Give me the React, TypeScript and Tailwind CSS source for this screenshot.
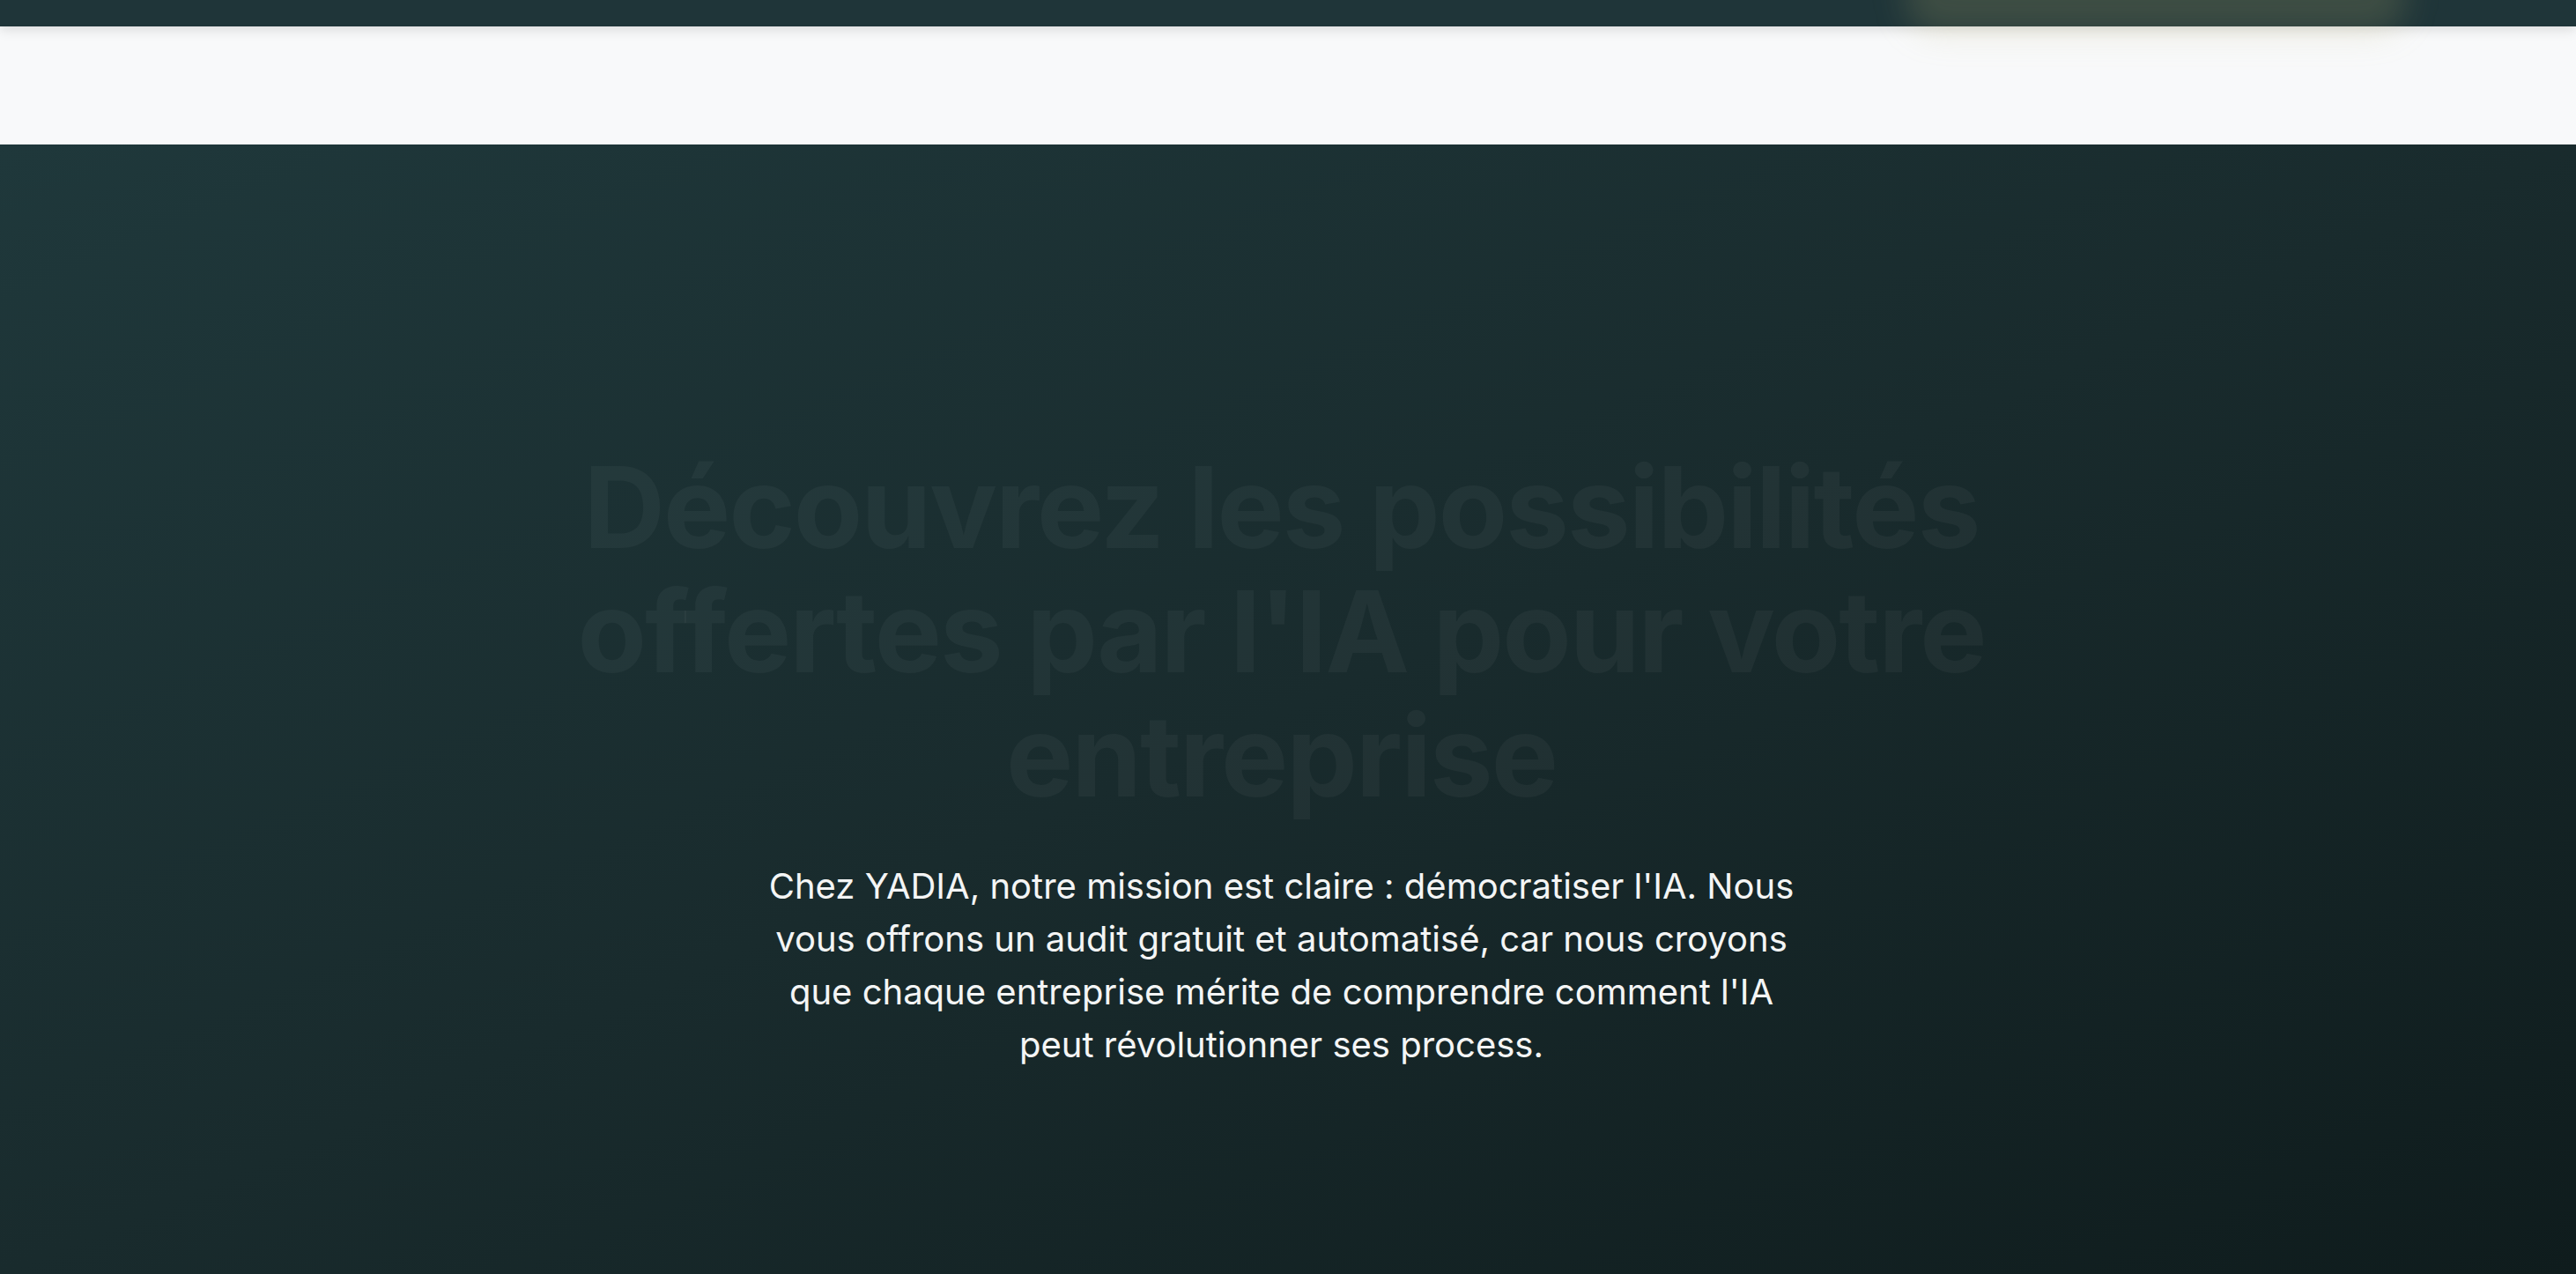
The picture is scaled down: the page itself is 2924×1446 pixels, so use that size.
import React from 'react';

export default function App() {
    return (
        <div className="relative min-h-screen w-full overflow-hidden bg-[#111e1f] font-['Inter','Noto_Sans',sans-serif]">
            {/* glow of a button sitting just above the visible area */}
            <div className="pointer-events-none absolute right-[192px] top-[-46px] z-30 h-[84px] w-[570px] rounded-[40px] bg-[#b8b070]/20 blur-[18px]" />

            <div className="relative z-20 h-[30px] w-full bg-[#1f3539] shadow-[0_4px_14px_rgba(0,0,0,0.12)]" />

            <header className="relative z-10 h-[134px] w-full bg-[#f8f9fa]" />

            <section className="flex min-h-[1282px] w-full flex-col items-center bg-linear-to-br from-[#1f383b] via-[#192b2d] to-[#0f1c1d] pl-8 pr-[47px] pt-[342px] pb-24">
                <h1 className="max-w-[1700px] text-center text-[128px] font-bold leading-[1.1] tracking-[-0.015em] text-white/[0.04]">
                    Découvrez les possibilités offertes par l'IA pour votre entreprise
                </h1>
                <p className="mt-12 max-w-[1200px] text-center text-[40px] leading-[1.5] text-[#f4f5f5]">
                    Chez YADIA, notre mission est claire : démocratiser l'IA. Nous vous offrons un audit gratuit et automatisé, car nous croyons que chaque entreprise mérite de comprendre comment l'IA peut révolutionner ses process.
                </p>
            </section>
        </div>
    );
}
